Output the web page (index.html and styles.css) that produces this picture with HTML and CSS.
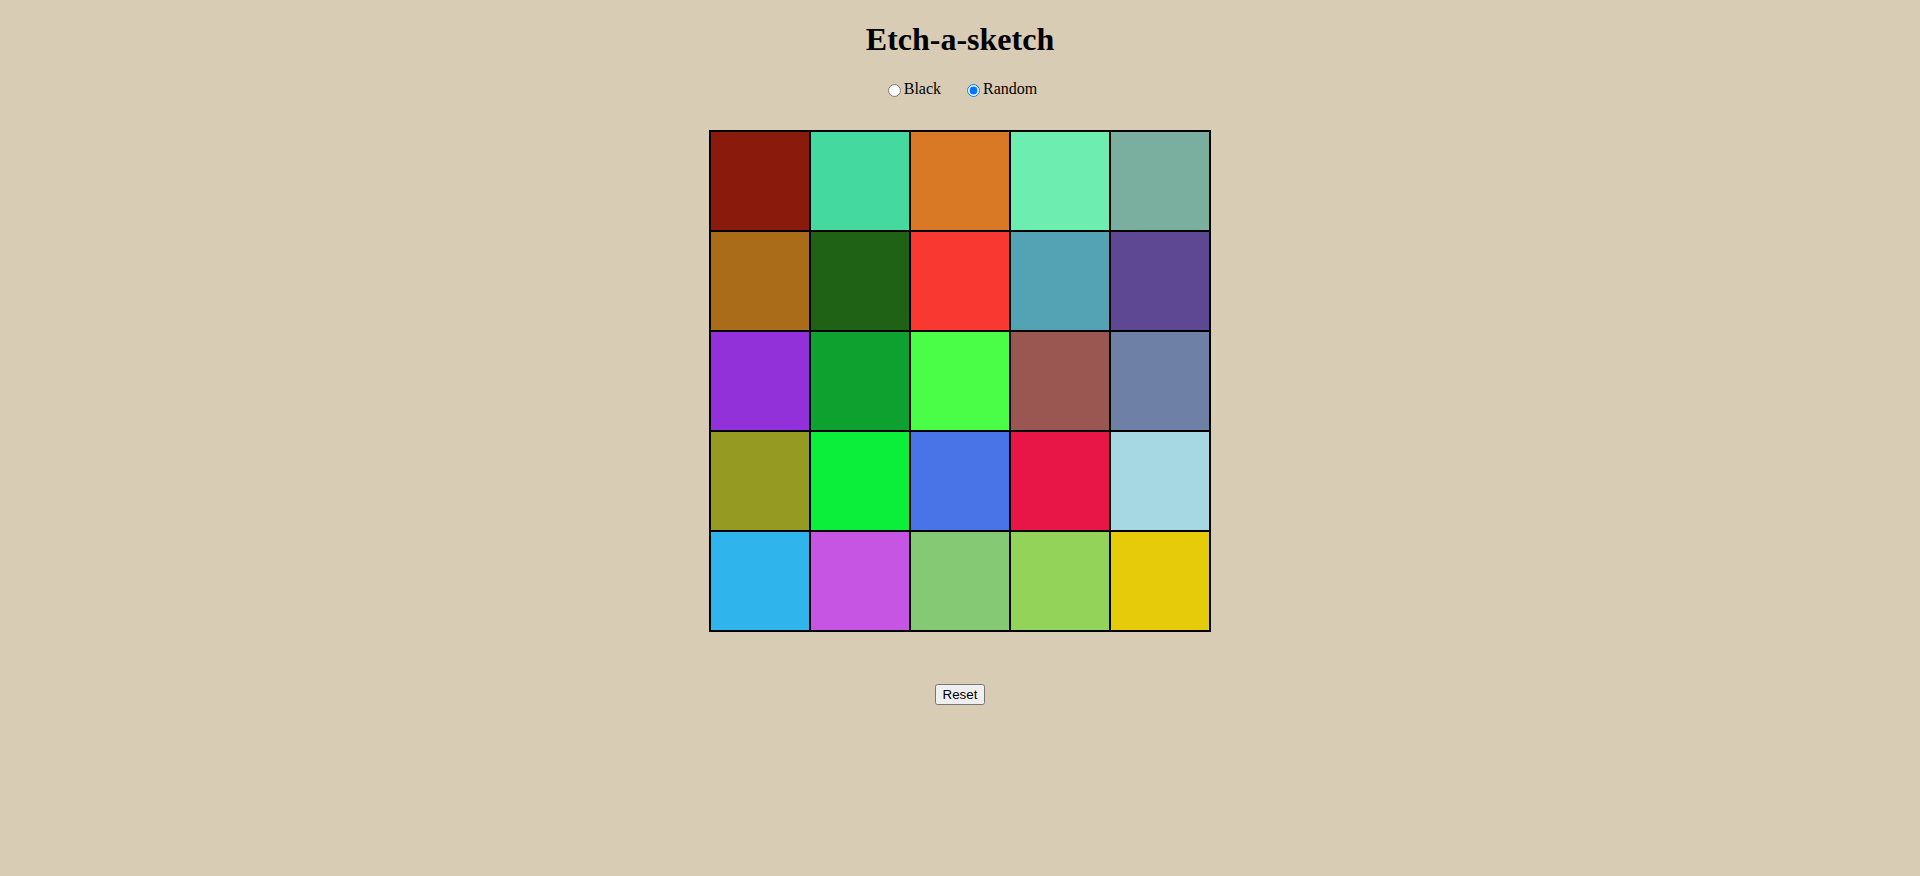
FILE: index.html
```html
<!DOCTYPE html>
<html>
<head>
<meta charset="utf-8">
<title>Etch-a-sketch</title>
<link rel="stylesheet" href="styles.css">
</head>
<body>
<h1 class="title">Etch-a-sketch</h1>
<div class="modes">
  <span class="mode"><input type="radio" name="mode" id="black"><label for="black">Black</label></span>
  <span class="mode"><input type="radio" name="mode" id="random" checked><label for="random">Random</label></span>
</div>
<div class="board">
  <div class="cell" style="background:#8a1b0c"></div>
  <div class="cell" style="background:#44d99f"></div>
  <div class="cell" style="background:#d97925"></div>
  <div class="cell" style="background:#6deeb0"></div>
  <div class="cell" style="background:#7aaf9f"></div>
  <div class="cell" style="background:#ab6c1a"></div>
  <div class="cell" style="background:#206215"></div>
  <div class="cell" style="background:#f93832"></div>
  <div class="cell" style="background:#53a3b5"></div>
  <div class="cell" style="background:#5f4893"></div>
  <div class="cell" style="background:#9231da"></div>
  <div class="cell" style="background:#0fa130"></div>
  <div class="cell" style="background:#4afd46"></div>
  <div class="cell" style="background:#9a5650"></div>
  <div class="cell" style="background:#6e80a6"></div>
  <div class="cell" style="background:#959a22"></div>
  <div class="cell" style="background:#0bef3b"></div>
  <div class="cell" style="background:#4974e8"></div>
  <div class="cell" style="background:#e81547"></div>
  <div class="cell" style="background:#a6d8e3"></div>
  <div class="cell" style="background:#2fb5ec"></div>
  <div class="cell" style="background:#c755e3"></div>
  <div class="cell" style="background:#85c974"></div>
  <div class="cell" style="background:#94d359"></div>
  <div class="cell" style="background:#e6cb0b"></div>
</div>
<div class="actions">
  <button class="reset">Reset</button>
</div>
</body>
</html>
```

FILE: styles.css
```css
body {
  background: #d8ccb5;
  font-family: "Liberation Serif", "Times New Roman", serif;
  text-align: center;
}

.title {
  font-size: 32px;
  font-weight: bold;
  margin: 13.44px 0 21.44px;
}

.modes {
  display: flex;
  justify-content: center;
  gap: 21px;
  font-size: 16px;
  height: 18px;
  line-height: 18px;
}

.mode {
  display: inline-flex;
  align-items: center;
}

.mode input {
  margin: 3px 3px 0 5px;
}

.board {
  width: 500px;
  margin: 32px auto 0;
  border: 1px solid #000;
  display: grid;
  grid-template-columns: repeat(5, 100px);
  grid-auto-rows: 100px;
}

.cell {
  box-sizing: border-box;
  border: 1px solid #000;
}

.actions {
  margin-top: 52px;
}

.reset {
  font-family: "Liberation Sans", Arial, sans-serif;
  font-size: 13.333px;
}
```
